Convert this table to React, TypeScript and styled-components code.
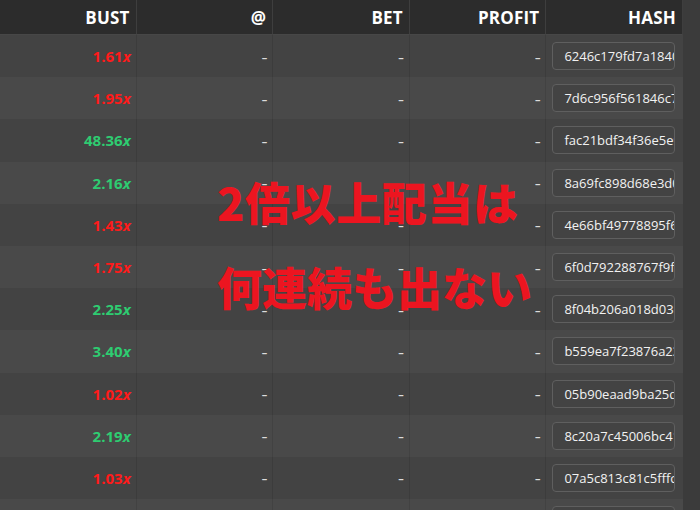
import React from "react";
import styled, { createGlobalStyle } from "styled-components";

const Global = createGlobalStyle`
  html, body { margin: 0; padding: 0; background: #3b3b3b; }
  body { font-family: "Open Sans", "Liberation Sans", sans-serif; }
  * { box-sizing: border-box; }
`;

const Scroller = styled.div`
  height: 510px;
  width: 700px;
  overflow-y: scroll;
  overflow-x: hidden;
  background: #3b3b3b;
  &::-webkit-scrollbar { width: 17px; background: #3d3d3d; }
  &::-webkit-scrollbar-track { background: #3d3d3d; }
  &::-webkit-scrollbar-thumb {
    background: #272a33;
    border-right: 6px solid transparent;
    background-clip: padding-box;
    border-radius: 5.5px 11px 11px 5.5px / 6px 6px 6px 6px;
  }
  &::-webkit-scrollbar-button { display: none; height: 0; }
`;

const Wrap = styled.div`
  position: relative;
  width: 683px;
`;

const Grid = styled.div`
  display: grid;
  grid-template-columns: repeat(5, 1fr);
`;

const HeadCell = styled.div`
  height: 35px;
  background: #2c2c2c;
  border-right: 1px solid #3e3e3e;
  border-bottom: 1px solid #474747;
  display: flex;
  align-items: center;
  justify-content: flex-end;
  padding-right: 6px;
  color: #ffffff;
  font-weight: 700;
  font-size: 17px;
  letter-spacing: 0.2px;
  &:last-child { border-right: none; padding-right: 7px; }
`;

const Cell = styled.div<{ $alt: boolean }>`
  height: 42.2px;
  background: ${(p) => (p.$alt ? "#494949" : "#434343")};
  border-right: 1px solid ${(p) => (p.$alt ? "#424242" : "#3c3c3c")};
  display: flex;
  align-items: center;
  justify-content: flex-end;
  padding-right: 5px;
  &:nth-child(5n) { border-right: none; justify-content: flex-start; padding: 0 7px 0 6px; }
`;

const Bust = styled.span<{ $win: boolean }>`
  color: ${(p) => (p.$win ? "#2ecc71" : "#ff1a1a")};
  font-weight: 700;
  font-size: 15px;
  em { font-style: italic; }
`;

const Dash = styled.span`
  color: #dcdcdc;
  font-size: 11px;
  font-weight: 700;
`;

const HashBox = styled.div`
  width: 123px;
  height: 28px;
  border: 1px solid #5f5f5f;
  border-radius: 4px;
  background: #434343;
  color: #f2f2f2;
  font-size: 13px;
  display: flex;
  align-items: center;
  padding: 0 11px;
  overflow: hidden;
  white-space: nowrap;
`;

const Overlay = styled.div`
  position: absolute;
  top: 179px;
  left: 217px;
  display: flex;
  flex-direction: column;
  gap: 40px;
  pointer-events: none;
`;

const Caption = styled.div<{ $spacing: number }>`
  font-family: "Noto Sans CJK JP", "Noto Sans", sans-serif;
  font-weight: 900;
  font-size: 45px;
  line-height: 45px;
  letter-spacing: ${(p) => p.$spacing}px;
  color: #ec1520;
  white-space: nowrap;
`;

type Row = { bust: string; hash: string };

const visible: Row[] = [
  { bust: "1.61", hash: "6246c179fd7a1840e2" },
  { bust: "1.95", hash: "7d6c956f561846c7a1" },
  { bust: "48.36", hash: "fac21bdf34f36e5e9b" },
  { bust: "2.16", hash: "8a69fc898d68e3d0c4" },
  { bust: "1.43", hash: "4e66bf49778895f6a2" },
  { bust: "1.75", hash: "6f0d792288767f9f31" },
  { bust: "2.25", hash: "8f04b206a018d03e7c" },
  { bust: "3.40", hash: "b559ea7f23876a23d0" },
  { bust: "1.02", hash: "05b90eaad9ba25d8f1" },
  { bust: "2.19", hash: "8c20a7c45006bc41e9" },
  { bust: "1.03", hash: "07a5c813c81c5fffc2" },
  { bust: "1.27", hash: "3b1e09d4c7a25f6e80" },
];

const extraBusts = ["1.12", "1.88", "3.05", "1.47", "2.71", "1.09", "1.66", "5.32", "1.21", "1.94", "2.08", "1.38"];
const hexChars = "0123456789abcdef";
const rows: Row[] = [...visible];
for (let i = 0; rows.length < 44; i++) {
  let h = "";
  for (let j = 0; j < 18; j++) h += hexChars[(i * 7 + j * 13 + j * j * 3) % 16];
  rows.push({ bust: extraBusts[i % extraBusts.length], hash: h });
}

export default function App() {
  return (
    <>
      <Global />
      <Scroller>
        <Wrap>
          <Grid>
            {["BUST", "@", "BET", "PROFIT", "HASH"].map((h) => (
              <HeadCell key={h}>{h}</HeadCell>
            ))}
            {rows.map((r, i) => {
              const alt = i % 2 === 1;
              const win = parseFloat(r.bust) >= 2;
              return (
                <React.Fragment key={i}>
                  <Cell $alt={alt}>
                    <Bust $win={win}>
                      {r.bust}
                      <em>x</em>
                    </Bust>
                  </Cell>
                  <Cell $alt={alt}>
                    <Dash>–</Dash>
                  </Cell>
                  <Cell $alt={alt}>
                    <Dash>–</Dash>
                  </Cell>
                  <Cell $alt={alt}>
                    <Dash>–</Dash>
                  </Cell>
                  <Cell $alt={alt}>
                    <HashBox>{r.hash}</HashBox>
                  </Cell>
                </React.Fragment>
              );
            })}
          </Grid>
          <Overlay>
            <Caption $spacing={0.6}>2倍以上配当は</Caption>
            <Caption $spacing={0}>何連続も出ない</Caption>
          </Overlay>
        </Wrap>
      </Scroller>
    </>
  );
}
